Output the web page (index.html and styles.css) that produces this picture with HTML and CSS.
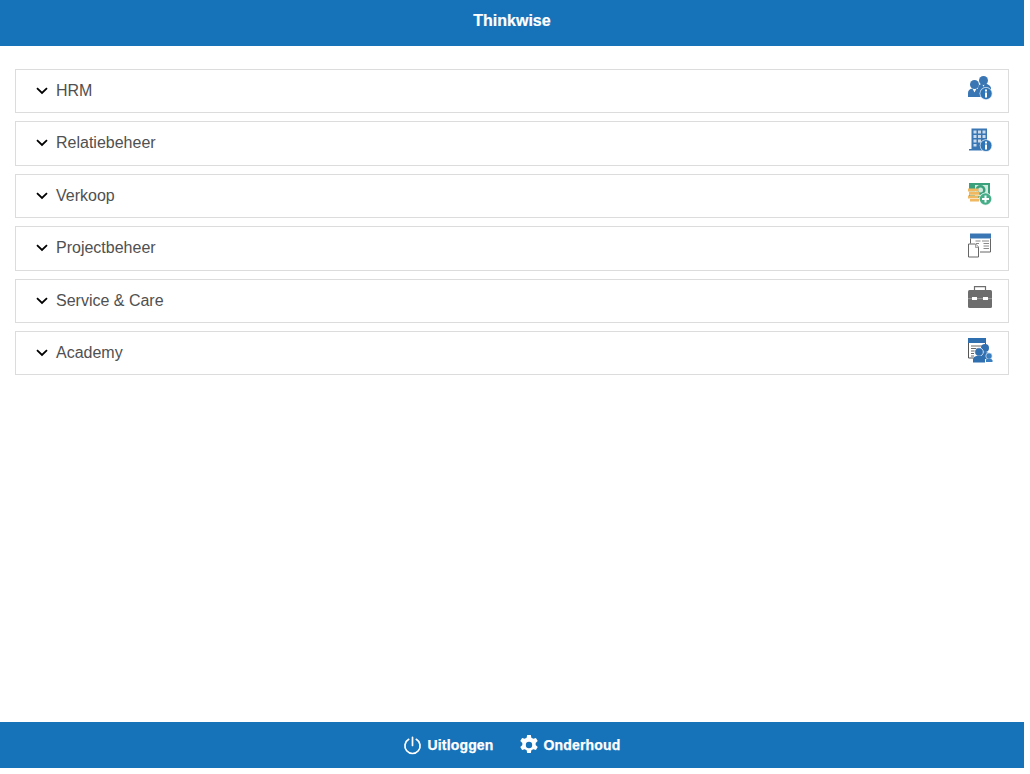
FILE: index.html
```html
<!DOCTYPE html>
<html lang="nl">
<head>
<meta charset="utf-8">
<title>Thinkwise</title>
<link rel="stylesheet" href="styles.css">
</head>
<body>
<div class="app">
  <header class="topbar">Thinkwise</header>
  <main class="menu">
    <div class="row">
      <svg class="chev" viewBox="0 0 12 8"><path d="M1 1.200 6 6l5-4.800"/></svg>
      <span class="label">HRM</span>
      <svg class="ico" viewBox="0 0 26 26">
        <circle cx="16.500" cy="5.500" r="4.500" fill="#3a76b4"/>
        <path d="M11 13q.5-4 4-4.300l1.500 3 1.500-3q4.500.3 6 4v3H11z" fill="#3a76b4"/>
        <circle cx="7.500" cy="9.500" r="4.500" fill="#3a76b4"/>
        <path d="M1 22v-4q0-4 4.500-4.500l2 4 2-4q4.500.5 5.500 4v4.500z" fill="#3a76b4"/>
        <path d="M7.500 17.500v4.500" stroke="#3a76b4"/>
        <circle cx="19" cy="18.500" r="6.500" fill="#d5e3f1"/>
        <circle cx="19" cy="18.500" r="5.700" fill="#2f74b5"/>
        <rect x="18" y="14.500" width="2" height="2" fill="#fff"/>
        <rect x="18" y="17.500" width="2" height="5" fill="#fff"/>
      </svg>
    </div>
    <div class="row">
      <svg class="chev" viewBox="0 0 12 8"><path d="M1 1.200 6 6l5-4.800"/></svg>
      <span class="label">Relatiebeheer</span>
      <svg class="ico" viewBox="0 0 26 26">
        <path d="M4.500 1.500h15.500v15h-4v7H2v-1.500h2.500z" fill="#3a76b4"/>
        <path d="M6.500 3.500h3v3h-3zM11 3.500h3v3h-3zM15.500 3.500h3v3h-3zM6.500 8h3v3h-3zM11 8h3v3h-3zM15.500 8h3v3h-3zM6.500 12.500h3v3h-3zM11 12.500h3v3h-3zM6.500 17h3v2.500h-3z" fill="#c9dbec"/>
        <circle cx="19" cy="18.500" r="6.300" fill="#d5e3f1"/>
        <circle cx="19" cy="18.500" r="5.500" fill="#2f74b5"/>
        <rect x="18" y="14.500" width="2" height="2" fill="#fff"/>
        <rect x="18" y="17.500" width="2" height="5" fill="#fff"/>
      </svg>
    </div>
    <div class="row">
      <svg class="chev" viewBox="0 0 12 8"><path d="M1 1.200 6 6l5-4.800"/></svg>
      <span class="label">Verkoop</span>
      <svg class="ico" viewBox="0 0 26 26">
        <rect x="2" y="3" width="21" height="15" fill="#3aa17c"/>
        <rect x="8" y="5" width="13" height="11" fill="#d3ebe1"/>
        <circle cx="13.500" cy="10" r="5" fill="#3aa17c"/>
        <circle cx="13.500" cy="10" r="2.500" fill="#cfe8dd"/>
        <path d="M1 8.500h10.500v3H1zM2 12h10.500v3H2zM1 15.500h10.500v3H1zM3 19h9v2.500H3z" fill="#f0b860"/>
        <path d="M2 11.500h9M3 15h9M2 18.500h9" stroke="#fbe6c1" stroke-width=".7"/>
        <circle cx="18.500" cy="19" r="6.500" fill="#e4f3ed"/>
        <circle cx="18.500" cy="19" r="5.800" fill="#45ad88"/>
        <path d="M18.500 15.500v7M15 19h7" stroke="#fff" stroke-width="2"/>
      </svg>
    </div>
    <div class="row">
      <svg class="chev" viewBox="0 0 12 8"><path d="M1 1.200 6 6l5-4.800"/></svg>
      <span class="label">Projectbeheer</span>
      <svg class="ico" viewBox="0 0 26 26">
        <rect x="3" y="1.500" width="21" height="5" fill="#3a76b4"/>
        <path d="M3.500 6.500v5M23.500 6.500v13.500H13" fill="none" stroke="#666"/>
        <path d="M15 9h7M16.500 11.500h5.500M16.500 14h5.500M16.500 16.500h5.500M8.500 9h5M9 11.500h3" stroke="#8a8a8a"/>
        <path d="M1.500 12h7l3 3v10h-10z" fill="#fff" stroke="#666"/>
        <path d="M8.500 12v3.500h3" fill="#ddd" stroke="#888" stroke-width=".7"/>
      </svg>
    </div>
    <div class="row">
      <svg class="chev" viewBox="0 0 12 8"><path d="M1 1.200 6 6l5-4.800"/></svg>
      <span class="label">Service &amp; Care</span>
      <svg class="ico" viewBox="0 0 26 26">
        <path d="M7.500 5V1.700h11V5" fill="none" stroke="#6d6d6d" stroke-width="1.200"/>
        <rect x="1" y="5" width="24" height="18" rx="1.500" fill="#6d6d6d"/>
        <rect x="1" y="13.300" width="24" height=".8" fill="#a8a8a8"/>
        <rect x="5" y="12" width="5" height="3" fill="#fff"/>
        <rect x="16" y="12" width="5" height="3" fill="#fff"/>
      </svg>
    </div>
    <div class="row">
      <svg class="chev" viewBox="0 0 12 8"><path d="M1 1.200 6 6l5-4.800"/></svg>
      <span class="label">Academy</span>
      <svg class="ico" viewBox="0 0 26 26">
        <rect x="1" y="1" width="18" height="5" fill="#2f6fb0"/>
        <path d="M1.500 6v15h5M18.500 6v3" fill="none" stroke="#555"/>
        <path d="M4 9h11M4 11.500h9M4 14h4M4 16.500h3M4 19h3" stroke="#666"/>
        <circle cx="18" cy="11" r="4" fill="#2f6fb0"/>
        <path d="M14 22v-5q0-2 4-2t4 3v4z" fill="#2f6fb0"/>
        <circle cx="22" cy="19" r="3.200" fill="#3a7fc0" stroke="#fff" stroke-width=".6"/>
        <path d="M19 25v-2q0-1.500 3-1.500t3.500 2v1.500z" fill="#3a7fc0"/>
        <circle cx="12" cy="15" r="4.300" fill="#2f6fb0" stroke="#fff" stroke-width=".7"/>
        <path d="M6 25.500v-3q0-3 3.500-3.500h5q3.500.5 3.500 3.500v3z" fill="#2f6fb0"/>
      </svg>
    </div>
  </main>
  <footer class="bottombar">
    <span class="action">
      <svg class="aico aico-power" viewBox="0 0 20 20"><path d="M10 1.500v8.500M6 3.500a8 8 0 1 0 8 0" fill="none" stroke="#fff" stroke-width="1.800" stroke-linecap="round"/></svg>
      Uitloggen
    </span>
    <span class="action">
      <svg class="aico" viewBox="1 1 22 22"><path fill="#fff" fill-rule="evenodd" d="M10 1h4l.6 3a8.300 8.300 0 0 1 2.100 1.200l2.900-1 2 3.500-2.300 2a8.300 8.300 0 0 1 0 2.400l2.300 2-2 3.500-2.900-1a8.300 8.300 0 0 1-2.100 1.200l-.6 3h-4l-.6-3a8.300 8.300 0 0 1-2.100-1.200l-2.900 1-2-3.500 2.300-2a8.300 8.300 0 0 1 0-2.400l-2.300-2 2-3.500 2.900 1A8.300 8.300 0 0 1 9.400 4zM12 8.500a3.500 3.500 0 1 0 0 7 3.500 3.500 0 0 0 0-7z"/></svg>
      Onderhoud
    </span>
  </footer>
</div>
</body>
</html>
```
FILE: styles.css
```css
html, body { margin: 0; padding: 0; background: #fff; }
.app {
  width: 1024px;
  height: 768px;
  display: flex;
  flex-direction: column;
  font-family: "Liberation Sans", Arial, sans-serif;
  overflow: hidden;
}
.topbar {
  height: 46px;
  flex: none;
  background: #1672b9;
  color: #fff;
  font-size: 16px;
  font-weight: 700;
  line-height: 41px;
  text-align: center;
  -webkit-text-stroke: .2px #fff;
}
.menu {
  flex: 1;
  padding: 22.8px 15px 0;
  display: flex;
  flex-direction: column;
  gap: 8.05px;
}
.row {
  height: 44.4px;
  box-sizing: border-box;
  border: 1px solid #dcdcdc;
  display: flex;
  align-items: center;
  padding: 0 15px 0 20px;
}
.chev {
  width: 12px;
  height: 8px;
  flex: none;
  fill: none;
  stroke: #000;
  stroke-width: 1.800;
}
.label {
  margin-left: 8px;
  font-size: 16px;
  color: #505050;
  flex: 1;
}
.ico {
  width: 26px;
  height: 26px;
  flex: none;
  margin-top: -6px;
}
.bottombar {
  height: 46px;
  flex: none;
  background: #1672b9;
  color: #fff;
  font-size: 14px;
  font-weight: 700;
  letter-spacing: .17px;
  -webkit-text-stroke: .25px #fff;
  display: flex;
  justify-content: center;
  align-items: center;
  gap: 25px;
}
.action {
  display: flex;
  align-items: center;
  gap: 5px;
}
.aico {
  width: 20px;
  height: 20px;
  flex: none;
}
.aico-power {
  width: 19px;
  height: 19px;
}
```
